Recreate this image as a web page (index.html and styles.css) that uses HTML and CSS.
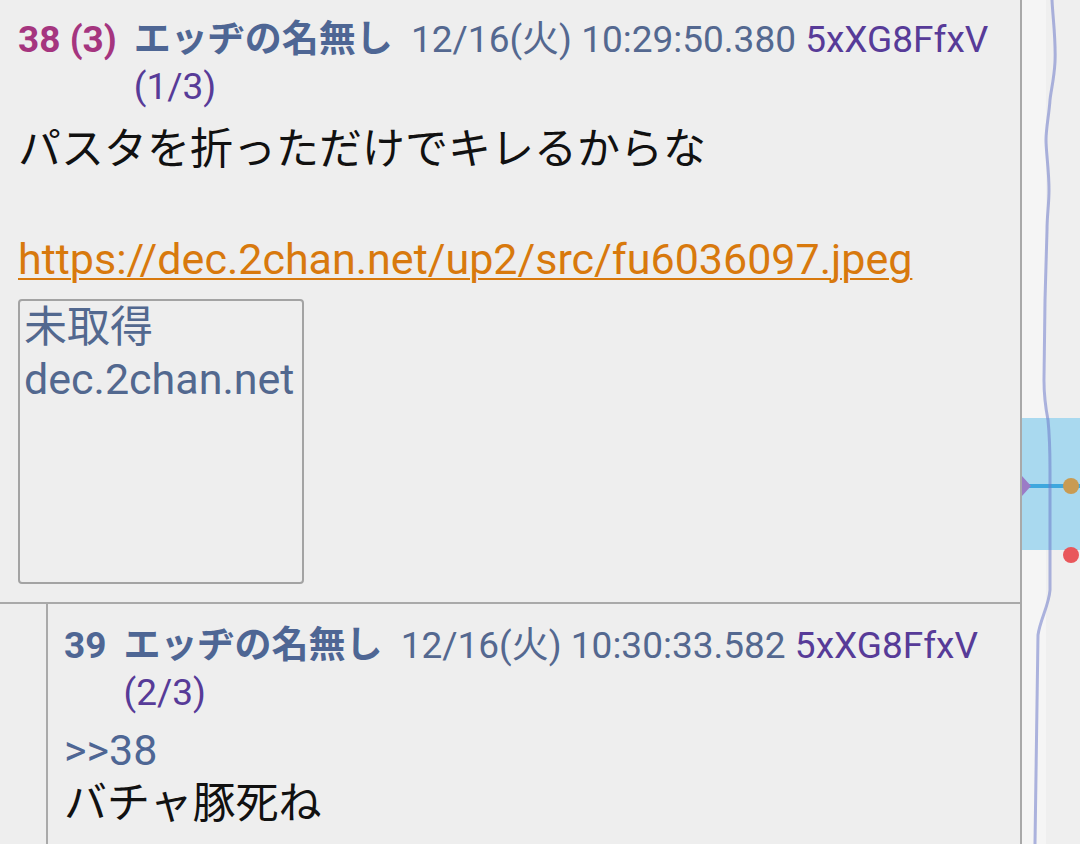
FILE: index.html
```html
<!DOCTYPE html>
<html lang="ja">

<head>
    <meta charset="UTF-8">
    <meta name="viewport" content="width=device-width, initial-scale=1.0">
    <title>スレッド</title>
    <link rel="stylesheet" href="styles.css">
</head>

<body>
    <div class="screen">
        <main class="thread">
            <article class="post">
                <div class="post-head">
                    <span class="no no-hot">38 (3)</span>
                    <span class="meta"><span class="name">エッヂの名無し</span> <span class="date">12/16(火) 10:29:50.380</span> <span class="uid">5xXG8FfxV</span> <span class="uid">(1/3)</span></span>
                </div>
                <div class="post-body">
                    <p>パスタを折っただけでキレるからな<br><br><a class="ext-link" href="#">https://dec.2chan.net/up2/src/fu6036097.jpeg</a></p>
                    <div class="thumb">
                        <span>未取得</span>
                        <span>dec.2chan.net</span>
                    </div>
                </div>
            </article>

            <div class="replies">
                <article class="post post-reply">
                    <div class="post-head">
                        <span class="no">39</span>
                        <span class="meta"><span class="name">エッヂの名無し</span> <span class="date">12/16(火) 10:30:33.582</span> <span class="uid">5xXG8FfxV</span> <span class="uid">(2/3)</span></span>
                    </div>
                    <div class="post-body">
                        <p><a class="anchor" href="#">&gt;&gt;38</a><br>バチャ豚死ね</p>
                    </div>
                </article>
            </div>
        </main>

        <aside class="minimap">
            <svg width="58" height="844" viewBox="0 0 58 844">
                <rect x="0" y="0" width="24" height="844" fill="#f5f5f5" />
                <rect x="0" y="418" width="58" height="132" fill="#a9d9ef" />
                <line x1="0" y1="486" x2="58" y2="486" stroke="#3ea7de" stroke-width="4" />
                <path d="M30 0 C31 20 34 40 33 62 C32 80 29 90 28 100 C27 115 24 128 24 140 C24 152 27 170 27 190 C27 205 25 215 25 230 L23 300 L22 380 C22 395 23 405 26 420 C28 440 28 455 28 470 L28 590 C27 605 18 620 16 635 L13 844"
                    fill="none" stroke="rgba(110,122,200,0.55)" stroke-width="3" />
                <polygon points="0,476 9,486 0,496" fill="#9b7cc6" />
                <circle cx="49" cy="486" r="8" fill="#c99b52" />
                <circle cx="49" cy="555" r="8" fill="#e9575b" />
            </svg>
        </aside>
    </div>
</body>

</html>
```

FILE: styles.css
```css
html,
body {
    margin: 0;
    padding: 0;
}

body {
    background: #eeeeee;
    font-family: Roboto, "Noto Sans CJK JP", sans-serif;
    overflow: hidden;
}

.screen {
    display: flex;
    width: 1080px;
    height: 844px;
    overflow: hidden;
}

.thread {
    width: 1020px;
    border-right: 2px solid #a9a9a9;
    flex-shrink: 0;
}

.minimap {
    flex: 1;
    background: #efefef;
}

.minimap svg {
    display: block;
}

.post {
    padding: 16px 12px 18px 18px;
}

.post-head {
    display: flex;
    font-size: 37px;
    line-height: 47px;
    color: #546890;
}

.no {
    flex-shrink: 0;
    font-weight: bold;
    color: #4e6694;
    margin-right: 17px;
}

.no-hot {
    color: #a5357f;
}

.name {
    font-weight: bold;
    color: #4e6694;
    margin-right: 9px;
}

.uid {
    color: #573b98;
}

.post-body {
    margin-top: 12px;
    font-size: 43px;
    line-height: 55px;
    color: #111111;
}

.post-body p {
    margin: 0;
}

.ext-link {
    color: #d8790d;
    text-decoration: underline;
    text-decoration-thickness: 2px;
    text-underline-offset: 4px;
}

.anchor {
    color: #4e6694;
    text-decoration: none;
}

.thumb {
    display: flex;
    flex-direction: column;
    width: 278px;
    height: 281px;
    margin-top: 12px;
    padding: 0 0 0 4px;
    border: 2px solid #a3a3a3;
    border-radius: 4px;
    color: #52688f;
    line-height: 52px;
}

.replies {
    border-top: 2px solid #a9a9a9;
    padding-left: 46px;
}

.post-reply {
    border-left: 2px solid #a9a9a9;
    padding: 18px 12px 20px 16px;
}

.post-reply .post-body {
    margin-top: 8px;
    line-height: 53px;
}
```
